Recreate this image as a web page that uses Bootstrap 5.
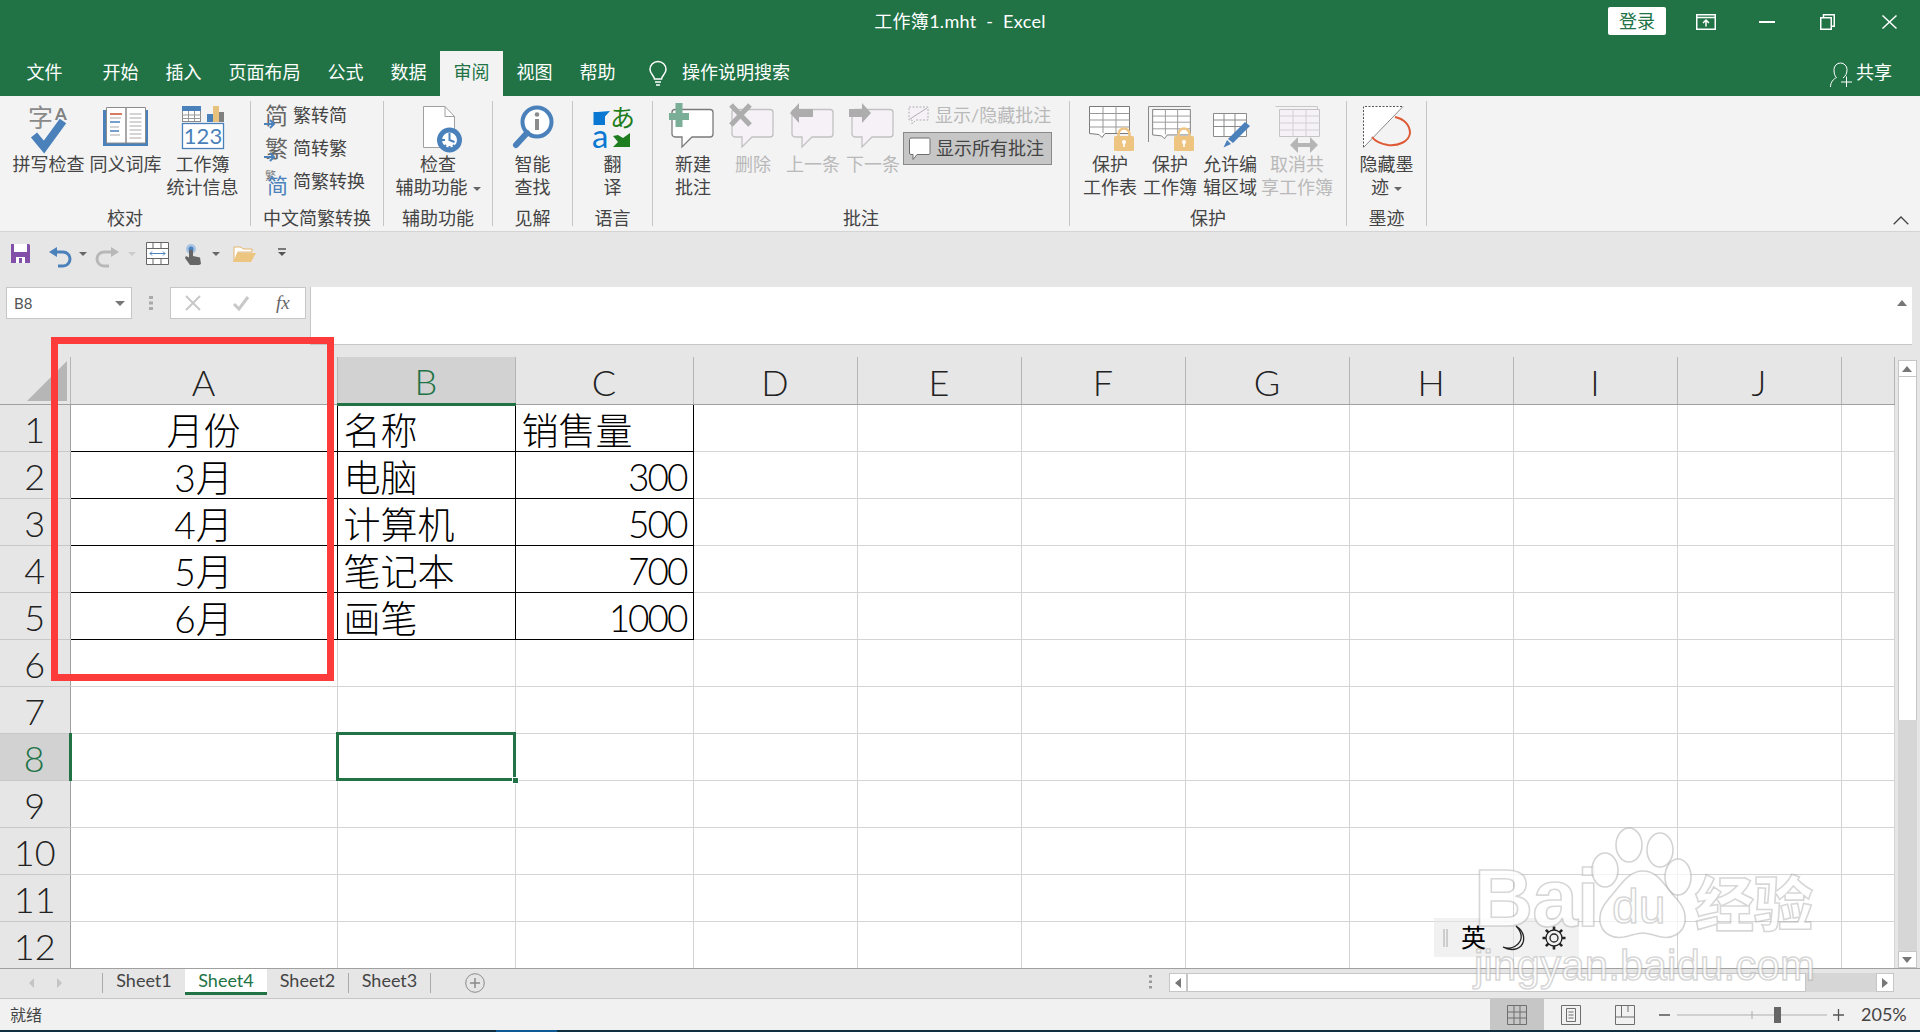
<!DOCTYPE html>
<html lang="zh-CN"><head><meta charset="utf-8"><title>工作簿1.mht - Excel</title>
<link href="https://cdn.jsdelivr.net/npm/bootstrap@5.3.0/dist/css/bootstrap.min.css" rel="stylesheet">
<style>
html,body{margin:0;height:1032px;overflow:hidden;background:#e6e6e6}
body{font-family:Lato,"Noto Sans CJK SC",sans-serif;font-size:18px;line-height:23px;color:#444}
svg{display:block;flex:none;overflow:visible}
svg text{font-family:Lato,"Noto Sans CJK SC",sans-serif}
svg text.fxt{font-family:"Liberation Serif",serif}
.app{width:1920px;height:1032px}
.head{background:#217346;color:#fff}
.tbar{height:51px}
.tbar>div{flex:1 1 0}
.ttl{white-space:pre;text-align:center;padding-top:10px;letter-spacing:.3px}
.login{width:58px;height:28px;background:#fff;color:#217346;border-radius:2px;margin:7px 9px 0 0;text-align:center;line-height:28px}
.wb{width:61px;height:44px;display:flex;align-items:center;justify-content:center}
.wb:last-child{width:62px}
.tabs{height:45px}
.tb{padding:10px 13.500px 0;white-space:nowrap}
.tb.first{margin:0 13px}
.tb.on{background:#f3f3f3;color:#217346}
.tell{padding:10px 0 0 20px;gap:15px}
.share{margin-left:auto;padding:10px 28px 0 0;gap:4px}
.ribbon{height:136px;background:#f3f3f3;border-bottom:1px solid #d4d4d4}
.grp{margin-top:5px;height:125px;border-right:1px solid #c6c6c6;padding-top:3px;flex:none}
.gb{height:103px}
.gl{text-align:center;height:23px}
.w1{width:251px}.w2{width:133px}.w3{width:109px}.w4{width:80px}.w6{width:417px}.w7{width:277px}
.pl{padding-left:10px}
.rb{width:60px;text-align:center;flex:none}
.rb.w77{width:77px}.rb.w74{width:74px}.rb.full{width:100%}
.rb svg{margin:0 auto 3px}
.dis{color:#b9b9b9}
.cd{display:inline-block;border:4px solid transparent;border-top:4px solid #666;border-bottom:0;vertical-align:middle;margin-left:5px}
.sm{height:24px;gap:5px;white-space:nowrap}
.zh{padding:0 0 0 13px;gap:9px}
.cmt{padding-left:4px;height:24px;gap:5px;white-space:nowrap}
.cmt.on{width:149px;height:33px;background:#c6c6c6;border:1px solid #8a8a8a;margin-top:4px}
.chev{margin:0 11px 6px auto;align-self:flex-end}
.qat{height:55px}
.fbar{height:58px}
.nbox{width:126px;height:32px;margin-left:6px;background:#fff;border:1px solid #c6c6c6;font-size:15px;line-height:30px;padding-left:7px;color:#555;position:relative}
.nbox i{position:absolute;right:6px;top:13px;border:5px solid transparent;border-top:5px solid #777;border-bottom:0}
.dots{width:38px;height:32px}
.fbox{width:136px;height:32px;background:#fff;border:1px solid #c6c6c6;margin-right:4px}
.input{flex:1;height:58px;background:#fff;border-left:1px solid #c6c6c6;border-bottom:1px solid #c6c6c6;margin-right:8px;padding:9px 5px 0 0}
.gap12{height:12px}
.sheetwrap{height:611px;overflow:hidden}
.sheet{table-layout:fixed;border-collapse:collapse;width:1894px;background:#fff}
.sheet th,.sheet td{height:47px;padding:0 7px 2px;border:1px solid #d4d4d4;line-height:1;white-space:nowrap;font-size:37px;color:#000;font-weight:400;vertical-align:bottom}
.sheet thead th{background:#e6e6e6;font-size:36px;text-align:center;border:0;border-right:1px solid #b5b5b5;border-bottom:1px solid #a0a0a0;font-weight:300;color:#222;padding-bottom:4px}
.sheet tbody th{background:#e6e6e6;font-size:36px;text-align:center;border-right:1px solid #a0a0a0;border-bottom-color:#c8c8c8;border-left:0;padding:0 0 4px;font-weight:300;color:#222}
.sheet td,.sheet th{font-family:Lato,"Noto Sans CJK SC",sans-serif}
.sheet .corner{padding:4px 0 0;position:relative;vertical-align:top}
.sheet .curc{background:#d2d2d2!important;color:#217346!important}
.sheet thead .curc{border-bottom:3px solid #217346!important}
.sheet tbody .curc{border-right:3px solid #217346!important}
.sheet td.b{border:1px solid #000;font-weight:300}
.sheet td.t{border-top-color:#a0a0a0}
.sheet td.c{text-align:center}
.sheet td.r{text-align:right;padding-right:6px;padding-bottom:3px}
.sheet td.l{padding-left:6px}
.num{letter-spacing:-2px}
.sheet td.sel{position:relative;outline:3px solid #217346;outline-offset:-2px}
.sel::after{content:"";position:absolute;right:-4px;bottom:-4px;width:7px;height:7px;background:#217346;border:1px solid #fff}
.vs{flex:1;background:#e6e6e6;padding:3px 0 0 3px}
.vbtn{width:19px;height:17px;background:#fff;border:1px solid #c6c6c6;display:flex;align-items:center;justify-content:center}
.vth{width:19px;height:343px;background:#fff;border:solid #c6c6c6;border-width:0 1px}
.vtr{width:19px;height:231px;background:#d6d6d6}
.tri-u{border:5px solid transparent;border-bottom:6px solid #777;border-top:0}
.tri-d{border:5px solid transparent;border-top:6px solid #777;border-bottom:0}
.stabs{height:31px;background:#e6e6e6;border-top:1px solid #a0a0a0;border-bottom:1px solid #c6c6c6}
.arr{width:103px;height:20px;margin-top:4px;border-right:1px solid #aaa}
.st{width:82px;height:20px;margin-top:4px;border-right:1px solid #aaa;text-align:center;line-height:14px;color:#444;font-size:18px;white-space:nowrap}
.st.a{height:26px;margin-top:0;background:#fff;border:0;border-bottom:3px solid #217346;color:#217346;line-height:22px}
.st.p{border-right:0}
.plus{margin:4px 0 0 34px}
.splt{margin:5px 17px 0 auto}
.hsc{margin-right:26px;width:725px;height:19px;margin-top:4px;background:#d6d6d6}
.hbtn{width:18px;height:19px;background:#fff;border:1px solid #c6c6c6;display:flex;align-items:center;justify-content:center}
.hth{width:619px;height:19px;background:#fff;border:1px solid #c6c6c6}
.tri-l{border:5px solid transparent;border-right:6px solid #777;border-left:0}
.tri-r{border:5px solid transparent;border-left:6px solid #777;border-right:0}
.status{height:31px;background:#f1f1f1;padding-left:10px;font-size:16px}
.view{width:54px;height:31px;display:flex;align-items:center;justify-content:center}
.view.on{background:#c6c6c6}
.pct{width:70px;padding-left:11px;font-size:18px;white-space:nowrap}
.task{height:2px;background:#10303f}
.task i{display:block;width:61px;height:2px;background:#0f5a94;margin-left:496px}
.redbox{position:absolute;left:51px;top:337px;width:283px;height:344px;border:7px solid #fe3b3b;pointer-events:none}
.ime{position:absolute;left:1434px;top:918px;width:145px;height:39px;background:rgba(232,232,232,.6);color:#000;font-size:25px;padding-left:3px}
.wm{position:absolute;left:1470px;top:825px;width:360px;height:170px;pointer-events:none;color:rgba(255,255,255,.75);-webkit-text-stroke:1.6px rgba(150,150,150,.38);font-family:"Liberation Sans",sans-serif;font-weight:700}
.wm b{position:absolute;white-space:nowrap}
.wm .bai{left:4px;top:32px;font-size:82px;line-height:1;letter-spacing:-1px}
.wm .du{left:142px;top:58px;font-size:48px;line-height:1;font-weight:400}
.wm .jy{left:4px;top:120px;font-size:42px;line-height:1;font-weight:400;letter-spacing:.15px}
.wm .zh2{left:225px;top:46px;font-size:59px;line-height:1;font-family:"Noto Sans CJK SC",sans-serif}
.wm svg{position:absolute;left:112px;top:0}
</style></head><body>
<svg width="0" height="0" class="position-absolute"><defs>
<symbol id="bub" viewBox="0 0 50 46"><path d="M7 5.500H42a3 3 0 0 1 3 3V30a3 3 0 0 1-3 3H24L14 43V33H7a3 3 0 0 1-3-3V8.500a3 3 0 0 1 3-3Z" fill="#fff" stroke="#7a7a7a" stroke-width="1.300"/></symbol>
<symbol id="bubd" viewBox="0 0 50 46"><path d="M7 5.500H42a3 3 0 0 1 3 3V30a3 3 0 0 1-3 3H24L14 43V33H7a3 3 0 0 1-3-3V8.500a3 3 0 0 1 3-3Z" fill="#f5f1f7" stroke="#c2c2c2" stroke-width="1.300"/></symbol>
<symbol id="lock" viewBox="0 0 20 24"><path d="M4.500 10V7a5.500 5.500 0 0 1 11 0v3" fill="none" stroke="#edc581" stroke-width="2.600"/><rect y="9" width="20" height="15" rx="1.500" fill="#edc581"/><circle cx="10" cy="15" r="2" fill="#fff"/><rect x="9.200" y="15" width="1.600" height="5" fill="#fff"/></symbol>
<symbol id="grid" viewBox="0 0 41 35"><path d="M.5.500h40v27H16l-3 4-3-3-9.500-1Z" fill="#fff" stroke="#7a7a7a"/><path d="M.5 7.500h40M.5 14h40M.5 21h40M14 .500V27M27 .500V27" stroke="#999" fill="none"/></symbol>
</defs></svg>
<div class="app position-relative d-flex flex-column">
<div class="head">
 <div class="tbar d-flex">
  <div></div>
  <div class="ttl">工作簿1.mht  -  Excel</div>
  <div class="d-flex justify-content-end">
   <div class="login">登录</div>
   <div class="wb"><svg width="20" height="16" viewBox="0 0 20 16"><path d="M.75.750h18.500v14.500H.75ZM.75 3.500h18.500" fill="none" stroke="#fff" stroke-width="1.500"/><path d="M10 12.500V6.500M7 9l3-3 3 3" fill="none" stroke="#fff" stroke-width="1.500"/></svg></div>
   <div class="wb"><svg width="16" height="2" viewBox="0 0 16 2"><path d="M0 1h16" stroke="#fff" stroke-width="2"/></svg></div>
   <div class="wb"><svg width="15" height="16" viewBox="0 0 15 16"><path d="M.75 3.750h10.500v11.500H.75ZM3.500 3.500V.75h10.750v11.500H11.500" fill="none" stroke="#fff" stroke-width="1.500"/></svg></div>
   <div class="wb"><svg width="15" height="14" viewBox="0 0 15 14"><path d="M.5.500l14 13M14.500.500l-14 13" stroke="#fff" stroke-width="1.500"/></svg></div>
  </div>
 </div>
 <div class="tabs d-flex">
  <div class="tb first">文件</div><div class="tb">开始</div><div class="tb">插入</div><div class="tb">页面布局</div><div class="tb">公式</div><div class="tb">数据</div><div class="tb on">审阅</div><div class="tb">视图</div><div class="tb">帮助</div>
  <div class="d-flex"><div class="tell d-flex">
   <svg width="18" height="26" viewBox="0 0 18 26"><path d="M5.500 18c0-3-4.500-5-4.500-9.500a8 8 0 0 1 16 0C17 13 12.500 15 12.500 18ZM6 21h6M7 24h4" fill="none" stroke="#fff" stroke-width="1.500"/></svg><span>操作说明搜索</span></div></div>
  <div class="share d-flex">
   <svg width="22" height="26" viewBox="0 0 22 26"><path d="M.5 26c0-5 3-8 6-9.500C4.500 15 4 12 4 8.500a6.500 6.500 0 0 1 13 0C17 12 16 15 13 17" fill="none" stroke="#fff"/><path d="M11 21h11M16.500 15.500v10.500" stroke="#fff"/></svg><span>共享</span></div>
 </div>
</div>

<div class="ribbon d-flex">
 <div class="grp w1"><div class="gb d-flex pl">
  <div class="rb w77"><svg width="50" height="46" viewBox="23 104 50 46"><text x="27" y="127" font-size="25" fill="#8a8a8a">字</text><text x="54" y="120" font-size="17" font-weight="700" fill="#808080">A</text><path d="M33 135l10 12 19-26" fill="none" stroke="#4a81bb" stroke-width="8"/></svg>拼写检查</div>
  <div class="rb w77"><svg width="50" height="46" viewBox="100 104 50 46"><rect x="102" y="110" width="45" height="36" fill="#4a81bb"/><path d="M105.500 107.500h19.500v35.500h-19.500ZM125 107.500h19.500v35.500H125Z" fill="#fff" stroke="#8c8c8c"/><path d="M109 114h12" stroke="#c9502f" stroke-width="1.500"/><path d="M109 118h11M109 127h9M109 135h10" stroke="#aaa" stroke-width="1.200"/><path d="M109 122h10M109 131h9" stroke="#4a81bb" stroke-width="1.500"/><path d="M128.500 114h12M128.500 118h12M128.500 122h12M128.500 126h12M128.500 130h12M128.500 134h12M128.500 138h12" stroke="#aaa" stroke-width="1.200"/></svg>同义词库</div>
  <div class="rb w77"><svg width="50" height="46" viewBox="177 104 50 46"><rect x="181.500" y="106.500" width="18" height="15" fill="#fff" stroke="#8c8c8c"/><rect x="181" y="106" width="19" height="5" fill="#4a81bb"/><path d="M181 115h19M181 118.500h19M187.500 111v10M193.500 111v10" stroke="#999"/><rect x="206" y="114" width="6" height="8" fill="#4a81bb"/><rect x="212" y="106" width="6" height="16" fill="#e8c27c"/><rect x="218" y="112" width="5" height="10" fill="#808080"/><rect x="181.500" y="123.500" width="41" height="25" fill="#fff" stroke="#4a81bb" stroke-width="1.300"/><text x="202" y="144" text-anchor="middle" font-size="22" fill="#4a81bb">123</text></svg>工作簿<br>统计信息</div>
 </div><div class="gl">校对</div></div>

 <div class="grp w2"><div class="gb d-flex flex-column zh">
  <div class="sm d-flex"><svg width="24" height="24" viewBox="0 0 24 24"><text x="1" y="20" font-size="23" fill="#666">简</text><path d="M0 20h9M6 16l4 4-4 4" fill="none" stroke="#4a81bb" stroke-width="2"/></svg><span>繁转简</span></div>
  <div class="sm d-flex"><svg width="24" height="24" viewBox="0 0 24 24"><text x="1" y="20" font-size="23" fill="#666">繁</text><path d="M0 20h9M6 16l4 4-4 4" fill="none" stroke="#4a81bb" stroke-width="2"/></svg><span>简转繁</span></div>
  <div class="sm d-flex"><svg width="24" height="24" viewBox="0 0 24 24"><text x="1" y="10" font-size="11" fill="#777">繁</text><text x="3" y="23" font-size="21" fill="#4a81bb">简</text></svg><span>简繁转换</span></div>
 </div><div class="gl">中文简繁转换</div></div>

 <div class="grp w3"><div class="gb">
  <div class="rb full"><svg width="50" height="46" viewBox="413 104 50 46"><path d="M423.500 106.500H445l9.500 10V147.500h-31Z" fill="#fff" stroke="#a0a0a0"/><path d="M445 106.500v10h9.500" fill="none" stroke="#a0a0a0"/><circle cx="449.500" cy="140" r="10" fill="#fff" stroke="#4a81bb" stroke-width="5"/><path d="M449.500 133v7l5 2M442 140h3M449.500 146v2M455 147l-2-2M444 147l2-2" stroke="#4a81bb" stroke-width="2" fill="none"/></svg>检查<br>辅助功能<i class="cd"></i></div>
 </div><div class="gl">辅助功能</div></div>

 <div class="grp w4"><div class="gb">
  <div class="rb full"><svg width="50" height="46" viewBox="508 104 50 46"><circle cx="537" cy="122" r="14.500" fill="#fff" stroke="#4a81bb" stroke-width="4"/><path d="M527 133l-11 12" stroke="#4a81bb" stroke-width="6" stroke-linecap="round"/><circle cx="537" cy="114.500" r="2.300" fill="#8c8c8c"/><rect x="535" y="119" width="4" height="11" fill="#8c8c8c"/></svg>智能<br>查找</div>
 </div><div class="gl">见解</div></div>

 <div class="grp w4"><div class="gb">
  <div class="rb full"><svg width="50" height="46" viewBox="588 104 50 46"><text x="610" y="127" font-size="25" fill="#1e7d1e">あ</text><text x="592" y="148" font-size="33" fill="#0a78d2">a</text><path d="M593.500 112h4l12.500-1-5 5.500v8.500h-11.500Z" fill="#0a78d2"/><path d="M630 147h-17l5-5-5-6 5-1 5 3 7-5Z" fill="#1e7d1e"/></svg>翻<br>译</div>
 </div><div class="gl">语言</div></div>

 <div class="grp w6"><div class="gb d-flex pl">
  <div class="rb"><svg width="50" height="46" viewBox="668 104 50 46"><use href="#bub" x="668" y="104" width="50" height="46"/><path d="M669 113h20v7h-6.500v7h-7v-7H669ZM675.500 103h7v10h-7Z" fill="#7aae97"/></svg>新建<br>批注</div>
  <div class="rb dis"><svg width="50" height="46" viewBox="728 104 50 46"><use href="#bubd" x="728" y="104" width="50" height="46"/><path d="M731 105l19 20M750 105l-19 20" stroke="#adadad" stroke-width="5"/></svg>删除</div>
  <div class="rb dis"><svg width="50" height="46" viewBox="788 104 50 46"><use href="#bubd" x="788" y="104" width="50" height="46"/><path d="M799 103l-9 10 9 10v-6h14v-8h-14Z" fill="#adadad"/></svg>上一条</div>
  <div class="rb dis"><svg width="50" height="46" viewBox="848 104 50 46"><use href="#bubd" x="848" y="104" width="50" height="46"/><path d="M862 103l9 10-9 10v-6h-13v-8h13Z" fill="#adadad"/></svg>下一条</div>
  <div>
   <div class="cmt d-flex dis"><svg width="23" height="24" viewBox="0 0 23 24"><path d="M2 3h19v13H9l-4 4v-4H2Z" fill="#f5f1f7" stroke="#b0b0b0" stroke-dasharray="2 1.500"/><path d="M3 15L20 4" stroke="#b0b0b0"/></svg><span>显示/隐藏批注</span></div>
   <div class="cmt on d-flex align-items-center"><svg width="23" height="26" viewBox="0 0 23 26"><path d="M3 2h18a1.500 1.500 0 0 1 1 1.500V17a1.500 1.500 0 0 1-1 1.500H9l-4 5v-5H3A1.500 1.500 0 0 1 1.500 17V3.500A1.500 1.500 0 0 1 3 2Z" fill="#fff" stroke="#6e6e6e"/></svg><span>显示所有批注</span></div>
  </div>
 </div><div class="gl">批注</div></div>

 <div class="grp w7"><div class="gb d-flex pl">
  <div class="rb"><svg width="50" height="46" viewBox="1085 104 50 46"><use href="#grid" x="1089" y="106" width="41" height="35"/><use href="#lock" x="1114" y="127" width="20" height="24"/></svg>保护<br>工作表</div>
  <div class="rb"><svg width="50" height="46" viewBox="1145 104 50 46"><path d="M1148.500 142V106.500h42" fill="none" stroke="#8a8a8a"/><use href="#grid" x="1151" y="109" width="41" height="33"/><use href="#lock" x="1174" y="127" width="20" height="24"/></svg>保护<br>工作簿</div>
  <div class="rb"><svg width="50" height="46" viewBox="1205 104 50 46"><path d="M1213.500 113.500h33v23h-33ZM1213.500 120h33M1213.500 126.500h33M1224 113.500v23M1235 113.500v23" fill="#fff" stroke="#8a8a8a"/><path d="M1228 139l17-17 5 4-17 17Z" fill="#4a81bb"/><path d="M1227 140l-3.500 7.500 7.500-3.500Z" fill="#4a81bb"/></svg>允许编<br>辑区域</div>
  <div class="rb w74 dis"><svg width="50" height="46" viewBox="1272 104 50 46"><path d="M1275.500 106.500h42v3" fill="none" stroke="#c8c8c8"/><path d="M1279.500 109.500h40v27h-40Z" fill="#f5f1f7" stroke="#c4c4c4"/><path d="M1279.500 116h40M1279.500 123h40M1279.500 130h40M1293 109.500v27M1306 109.500v27" stroke="#d2d0d4"/><path d="M1292 145h24" stroke="#b5b5b5" stroke-width="4"/><path d="M1298 137l-8 8 8 8ZM1310 137l8 8-8 8Z" fill="#b5b5b5"/></svg>取消共<br>享工作簿</div>
 </div><div class="gl">保护</div></div>

 <div class="grp w4"><div class="gb">
  <div class="rb full"><svg width="50" height="46" viewBox="1362 104 50 46"><path d="M1363.500 106.500h39.500l-39.500 41Z" fill="#fff"/><path d="M1363.500 147V106.500h39.500" fill="none" stroke="#555" stroke-dasharray="2 1.500"/><path d="M1403 106.500l-39.500 41" stroke="#8a8a8a"/><path d="M1395 117c10 2 15 9 15 16-1 9-12 13-22 12-7-1-13-4-16-8" fill="none" stroke="#de5a36" stroke-width="2"/></svg>隐藏墨<br>迹<i class="cd"></i></div>
 </div><div class="gl">墨迹</div></div>
 <svg class="chev" width="16" height="9" viewBox="0 0 16 9"><path d="M.7 8.300L8 1l7.300 7.300" fill="none" stroke="#444" stroke-width="1.300"/></svg>
</div>

<div class="qat"><svg width="300" height="48" viewBox="0 232 300 48">
 <path d="M11 244h18l1 1v18H11Z" fill="#8250a8"/><rect x="14" y="244" width="13" height="8" fill="#fff"/><rect x="16" y="257" width="9" height="6" fill="#fff"/><rect x="19" y="258" width="3" height="5" fill="#8250a8"/>
 <path d="M54 252h9a7 7 0 0 1 0 14h-5" fill="none" stroke="#4a81bb" stroke-width="3"/><path d="M49 252l8-5v10Z" fill="#4a81bb"/>
 <path d="M79 252h8l-4 4Z" fill="#666"/>
 <path d="M113 252h-9a7 7 0 0 0 0 14h5" fill="none" stroke="#b8b8b8" stroke-width="3"/><path d="M119 252l-8-5v10Z" fill="#b8b8b8"/>
 <path d="M128 252h8l-4 4Z" fill="#ccc"/>
 <path d="M146.500 242.500h22v22h-22ZM146.500 248.500h22M146.500 258.500h22M153 242.500v6M161 242.500v6M153 258.500v6M161 258.500v6" fill="#fff" stroke="#666"/><path d="M150 253.500h15M152 251.500l-2 2 2 2M163 251.500l2 2-2 2" fill="none" stroke="#4a81bb"/>
 <circle cx="191" cy="249" r="5" fill="#a8c4e4"/><circle cx="191" cy="249" r="2.500" fill="#4a81bb"/><path d="M189 250h4v6l7 1.500 1 6.500-2 1h-9l-5-7 1-2 3 1.500Z" fill="#666"/>
 <path d="M212 252h8l-4 4Z" fill="#666"/>
 <path d="M234 262v-15h7l2 2h9v3h-14Z" fill="#fff" stroke="#e3b66c"/><path d="M233 262l5-9h18l-5 9Z" fill="#ecc580"/>
 <path d="M278 249h8" stroke="#555" stroke-width="1.500"/><path d="M278 252h8l-4 4Z" fill="#555"/>
</svg></div>

<div class="fbar d-flex">
 <div class="nbox">B8<i></i></div>
 <div class="dots d-flex align-items-center justify-content-center"><svg width="4" height="14" viewBox="0 0 4 14"><path d="M0 0h4v3H0ZM0 5.500h4v3H0ZM0 11h4v3H0Z" fill="#aaa"/></svg></div>
 <div class="fbox d-flex align-items-center">
  <svg class="ms-2 ps-1" width="24" height="16" viewBox="0 0 16 16"><path d="M1 1l14 14M15 1L1 15" stroke="#c8c8c8" stroke-width="2"/></svg>
  <svg class="ms-4 ps-1" width="24" height="16" viewBox="0 0 16 16"><path d="M1 9l5 5 9-12" fill="none" stroke="#c8c8c8" stroke-width="3"/></svg>
  <svg class="ms-4" width="24" height="22" viewBox="0 0 24 22"><text class="fxt" x="1" y="17" font-size="19" font-style="italic" fill="#666">fx</text></svg>
 </div>
 <div class="input d-flex justify-content-end align-items-start"><div class="tri-u mt-1"></div></div>
</div>
<div class="gap12"></div>

<div class="d-flex">
<div class="sheetwrap">
<table class="sheet"><colgroup><col width="70"><col width="267"><col width="178"><col width="178"><col width="164"><col width="164"><col width="164"><col width="164"><col width="164"><col width="164"><col width="164"><col width="53"></colgroup>
<thead><tr><th class="corner"><svg class="ms-auto" width="43" height="40" viewBox="0 0 43 40"><path d="M40 0v40H0Z" fill="#b6b6b6"/></svg></th><th>A</th><th class="curc">B</th><th>C</th><th>D</th><th>E</th><th>F</th><th>G</th><th>H</th><th>I</th><th>J</th><th></th></tr></thead>
<tbody>
<tr><th>1</th><td class="b t c">月份</td><td class="b l">名称</td><td class="b t l">销售量</td><td></td><td></td><td></td><td></td><td></td><td></td><td></td><td></td></tr>
<tr><th>2</th><td class="b c">3月</td><td class="b l">电脑</td><td class="b r"><span class="num">300</span></td><td></td><td></td><td></td><td></td><td></td><td></td><td></td><td></td></tr>
<tr><th>3</th><td class="b c">4月</td><td class="b l">计算机</td><td class="b r"><span class="num">500</span></td><td></td><td></td><td></td><td></td><td></td><td></td><td></td><td></td></tr>
<tr><th>4</th><td class="b c">5月</td><td class="b l">笔记本</td><td class="b r"><span class="num">700</span></td><td></td><td></td><td></td><td></td><td></td><td></td><td></td><td></td></tr>
<tr><th>5</th><td class="b c">6月</td><td class="b l">画笔</td><td class="b r"><span class="num">1000</span></td><td></td><td></td><td></td><td></td><td></td><td></td><td></td><td></td></tr>
<tr><th>6</th><td></td><td></td><td></td><td></td><td></td><td></td><td></td><td></td><td></td><td></td><td></td></tr>
<tr><th>7</th><td></td><td></td><td></td><td></td><td></td><td></td><td></td><td></td><td></td><td></td><td></td></tr>
<tr><th class="curc">8</th><td></td><td class="sel"></td><td></td><td></td><td></td><td></td><td></td><td></td><td></td><td></td><td></td></tr>
<tr><th>9</th><td></td><td></td><td></td><td></td><td></td><td></td><td></td><td></td><td></td><td></td><td></td></tr>
<tr><th>10</th><td></td><td></td><td></td><td></td><td></td><td></td><td></td><td></td><td></td><td></td><td></td></tr>
<tr><th>11</th><td></td><td></td><td></td><td></td><td></td><td></td><td></td><td></td><td></td><td></td><td></td></tr>
<tr><th>12</th><td></td><td></td><td></td><td></td><td></td><td></td><td></td><td></td><td></td><td></td><td></td></tr>
</tbody></table>
</div>
<div class="vs">
 <div class="vbtn"><div class="tri-u"></div></div><div class="vth"></div><div class="vtr"></div><div class="vbtn"><div class="tri-d"></div></div>
</div>
</div>

<div class="stabs d-flex">
 <div class="arr"><svg width="70" height="20" viewBox="0 0 70 20"><path d="M34 5l-5 5 5 5ZM57 5l5 5-5 5Z" fill="#c4c4c4"/></svg></div>
 <div class="st p">Sheet1</div><div class="st a">Sheet4</div><div class="st">Sheet2</div><div class="st">Sheet3</div>
 <svg class="plus" width="20" height="20" viewBox="0 0 20 20"><circle cx="10" cy="10" r="9.300" fill="none" stroke="#8a8a8a"/><path d="M10 5v10M5 10h10" stroke="#8a8a8a" stroke-width="1.500"/></svg>
 <svg class="splt" width="3" height="16" viewBox="0 0 3 16"><path d="M0 1h3v2.500H0ZM0 6.500h3V9H0ZM0 12h3v2.500H0Z" fill="#999"/></svg>
 <div class="hsc d-flex">
  <div class="hbtn"><div class="tri-l"></div></div><div class="hth"></div><div class="flex-fill"></div><div class="hbtn"><div class="tri-r"></div></div>
 </div>
</div>

<div class="status d-flex align-items-center">
 <span class="flex-fill">就绪</span>
 <div class="view on"><svg width="20" height="20" viewBox="0 0 20 20"><path d="M.5.500h19v19H.5ZM7 .500v19M13 .500v19M.5 7h19M.5 13h19" fill="none" stroke="#6e6e6e"/></svg></div>
 <div class="view"><svg width="20" height="20" viewBox="0 0 20 20"><path d="M.5.500h19v19H.5ZM5.500 3.500h9v13h-9ZM7.500 7h5M7.500 10h5M7.500 13h5" fill="none" stroke="#6e6e6e"/></svg></div>
 <div class="view"><svg width="20" height="20" viewBox="0 0 20 20"><path d="M.5.500h19v19H.5ZM.5 12h19M6.500.500V12M13 .500V7" fill="none" stroke="#6e6e6e"/></svg></div>
 <svg width="198" height="18" viewBox="0 0 198 18"><path d="M7 9h11" stroke="#555" stroke-width="1.500"/><path d="M25 9h150" stroke="#b0b0b0" stroke-width="1.200"/><path d="M100 5v8" stroke="#aaa"/><rect x="122" y="1" width="7" height="16" fill="#666"/><path d="M181 9h11M186.500 3v12" stroke="#555" stroke-width="1.300"/></svg>
 <span class="pct">205%</span>
</div>
<div class="task"><i></i></div>

<div class="redbox"></div>
<div class="ime d-flex align-items-center">
 <svg width="20" height="20" viewBox="0 0 8 20"><path d="M1 1v18M4 1v18" stroke="#aaa"/></svg>
 <span class="ms-1">英</span>
 <svg class="ms-3" width="24" height="26" viewBox="0 0 24 26"><path d="M14 1c6 6 7 13 2 18-4 4-10 5-15 3 5 3 13 4 18-1 5-6 3-15-5-20Z" fill="none" stroke="#222" stroke-width="1.300"/></svg>
 <svg class="ms-3" width="24" height="24" viewBox="0 0 24 24"><circle cx="12" cy="12" r="4" fill="none" stroke="#222" stroke-width="1.300"/><circle cx="12" cy="12" r="8" fill="none" stroke="#222" stroke-width="1.300"/><path d="M12 .500v3.500M12 20v3.500M.5 12H4M20 12h3.500M3.900 3.900l2.500 2.500M17.600 17.600l2.500 2.500M3.900 20.100l2.500-2.500M17.600 6.400l2.500-2.500" stroke="#222" stroke-width="2.600"/></svg>
</div>
<div class="wm">
 <b class="bai">Bai</b>
 <svg width="110" height="115" viewBox="0 0 110 115"><g fill="rgba(255,255,255,.75)" stroke="rgba(150,150,150,.42)" stroke-width="1.600"><ellipse cx="23" cy="45" rx="13" ry="17"/><ellipse cx="47" cy="20" rx="13" ry="17"/><ellipse cx="78" cy="25" rx="13" ry="17"/><ellipse cx="96" cy="52" rx="13" ry="18"/><path transform="translate(6,6)" d="M55 40c14 0 20 12 30 24 10 10 13 17 12 27-2 12-14 17-24 15-9-2-13-4-18-4s-10 2-19 4c-11 2-22-3-24-15-1-10 3-17 12-27 10-12 17-24 31-24Z"/></g></svg>
 <b class="du">du</b>
 <b class="zh2">经验</b>
 <b class="jy">jingyan.baidu.com</b>
</div>
</div>
<script src="https://cdn.jsdelivr.net/npm/bootstrap@5.3.0/dist/js/bootstrap.bundle.min.js"></script>
</body></html>
